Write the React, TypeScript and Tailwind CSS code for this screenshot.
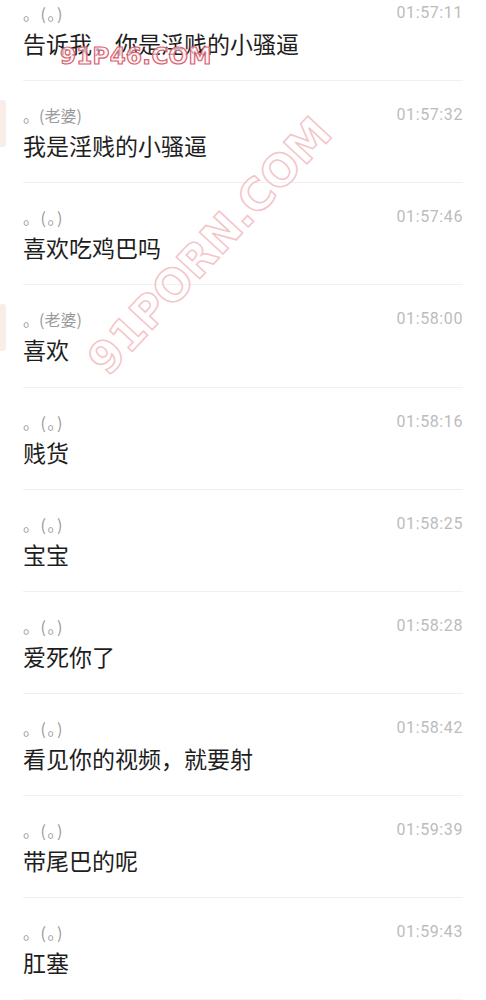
const MESSAGES = [
  { name: '。(。)', time: '01:57:11', text: '告诉我，你是淫贱的小骚逼', wife: false },
  { name: '。(老婆)', time: '01:57:32', text: '我是淫贱的小骚逼', wife: true },
  { name: '。(。)', time: '01:57:46', text: '喜欢吃鸡巴吗', wife: false },
  { name: '。(老婆)', time: '01:58:00', text: '喜欢', wife: true },
  { name: '。(。)', time: '01:58:16', text: '贱货', wife: false },
  { name: '。(。)', time: '01:58:25', text: '宝宝', wife: false },
  { name: '。(。)', time: '01:58:28', text: '爱死你了', wife: false },
  { name: '。(。)', time: '01:58:42', text: '看见你的视频，就要射', wife: false },
  { name: '。(。)', time: '01:59:39', text: '带尾巴的呢', wife: false },
  { name: '。(。)', time: '01:59:43', text: '肛塞', wife: false },
];

export default function App() {
  return (
    <div className="relative h-[1000px] w-[486px] overflow-hidden bg-white font-['Roboto','Noto_Sans_CJK_SC',sans-serif]">
      <div className="-mt-[21px]">
        {MESSAGES.map((m, i) => (
          <div key={i} className="relative px-[23px]">
            {m.wife && (
              <div className="absolute left-0 top-[19px] h-[47px] w-[6px] rounded-r-[3px] bg-[#f8eee7]" aria-hidden />
            )}
            <div className="flex h-[102.125px] flex-col border-b border-[#f0f0f0] pt-[24px]">
              <div className="flex h-[20px] items-center justify-between">
                <span
                  className={
                    m.wife
                      ? "font-['Noto_Sans_CJK_SC',sans-serif] text-[16px] leading-[20px] text-[#9a9a9a]"
                      : "font-['Noto_Sans_CJK_SC',sans-serif] text-[16px] leading-[20px] tracking-[1.5px] text-[#9a9a9a]"
                  }
                >
                  {m.name}
                </span>
                <span className="text-[16px] leading-[20px] tracking-[0.6px] text-[#bcbcbc]">{m.time}</span>
              </div>
              <p className="mt-[8px] text-[23px] leading-[30px] text-[#1e1e1e]">{m.text}</p>
            </div>
          </div>
        ))}
      </div>

      {/* watermarks */}
      <div
        className="pointer-events-none absolute left-[60px] top-[41px] font-['DejaVu_Sans',sans-serif] text-[23px] font-bold leading-[30px] tracking-[0.3px] text-[#fdf0f1]/70 [-webkit-text-stroke:1.2px_#d9606f]"
        aria-hidden
      >
        91P46.COM
      </div>
      <div
        className="pointer-events-none absolute left-[20px] top-[222px] w-[380px] -rotate-[47deg] text-center font-['DejaVu_Sans',sans-serif] text-[44px] font-bold leading-[48px] text-white/40 [-webkit-text-stroke:1.5px_#f4c4c7]"
        aria-hidden
      >
        91PORN.COM
      </div>
    </div>
  );
}
